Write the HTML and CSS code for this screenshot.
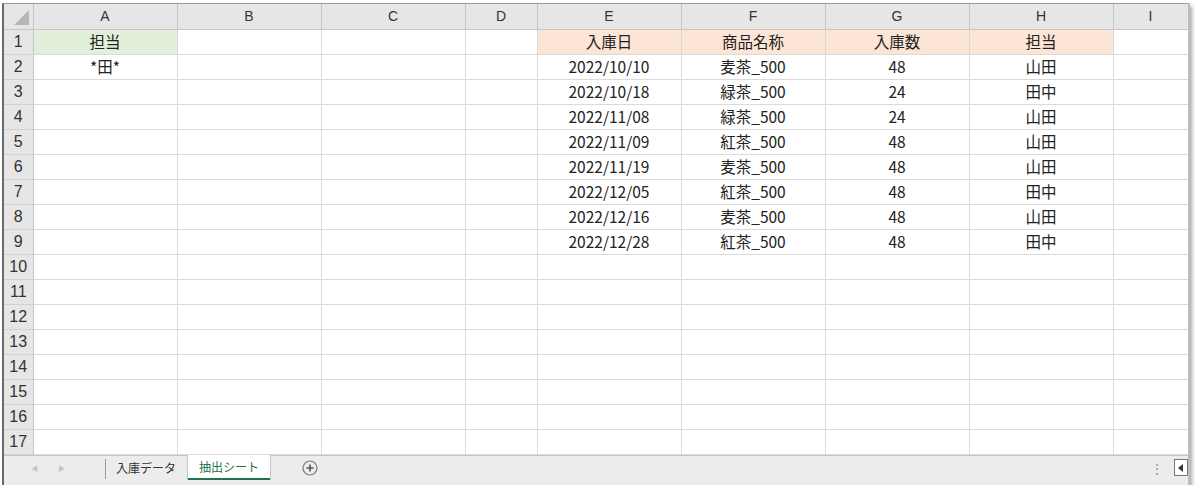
FILE: index.html
```html
<!DOCTYPE html>
<html lang="ja">
<head>
    <meta charset="UTF-8"/>
    <title>抽出シート</title>
<link rel="stylesheet" href="styles.css">
</head>
<body>
    <div id="book">
        <!-- Cell grid -->
        <table id="sheet">
            <colgroup>
                <col class="c-row"><col class="c-wide"><col class="c-wide"><col class="c-wide">
                <col class="c-narrow"><col class="c-wide"><col class="c-wide"><col class="c-wide">
                <col class="c-wide"><col class="c-rest">
            </colgroup>
            <thead>
                <tr>
                    <th class="corner"><span class="tri"></span></th>
                    <th>A</th><th>B</th><th>C</th><th>D</th><th>E</th><th>F</th><th>G</th><th>H</th><th>I</th>
                </tr>
            </thead>
            <tbody id="rows"></tbody>
        </table>

        <!-- Sheet tabs -->
        <div class="tabbar">
            <span class="nav">&#9664;</span>
            <span class="nav">&#9654;</span>
            <span class="sep"></span>
            <span class="tab">入庫データ</span>
            <span class="tab active">抽出シート</span>
            <span class="add">
                <svg width="16" height="16" viewBox="0 0 16 16"><circle cx="8" cy="8" r="7" fill="none" stroke="#777" stroke-width="1.2"/><path d="M8 4.5v7M4.5 8h7" stroke="#555" stroke-width="1.6"/></svg>
            </span>
            <span class="fill"></span>
            <span class="dots">&#8942;</span>
            <span class="scroll"><span class="arrow"></span></span>
        </div>
    </div>
    <script>
        var data = [
            ["2022/10/10", "麦茶_500", "48", "山田"],
            ["2022/10/18", "緑茶_500", "24", "田中"],
            ["2022/11/08", "緑茶_500", "24", "山田"],
            ["2022/11/09", "紅茶_500", "48", "山田"],
            ["2022/11/19", "麦茶_500", "48", "山田"],
            ["2022/12/05", "紅茶_500", "48", "田中"],
            ["2022/12/16", "麦茶_500", "48", "山田"],
            ["2022/12/28", "紅茶_500", "48", "田中"]
        ];
        var body = document.getElementById("rows");
        var html = "";
        for (var r = 1; r <= 17; r++) {
            var cells = ["", "", "", "", "", "", "", "", ""];
            var cls = ["", "", "", "", "", "", "", "", ""];
            if (r == 1) {
                cells[0] = "担当"; cls[0] = "green";
                cells[4] = "入庫日"; cells[5] = "商品名称"; cells[6] = "入庫数"; cells[7] = "担当";
                cls[4] = cls[5] = cls[6] = cls[7] = "orange";
            } else if (r == 2) {
                cells[0] = "*田*";
            }
            if (r >= 2 && r <= 9) {
                var d = data[r - 2];
                cells[4] = d[0]; cells[5] = d[1]; cells[6] = d[2]; cells[7] = d[3];
            }
            html += "<tr><th>" + r + "</th>";
            for (var c = 0; c < 9; c++) {
                html += '<td class="' + cls[c] + '">' + cells[c] + "</td>";
            }
            html += "</tr>";
        }
        body.innerHTML = html;
    </script>
</body>
</html>
```

FILE: styles.css
```css
* {
    margin: 0;
    padding: 0;
    box-sizing: border-box;
}

body {
    background: #fff;
    font-family: "Noto Sans CJK JP", "Noto Sans", sans-serif;
}

#book {
    margin: 3px 0 0 2px;
    width: 1186px;
    height: 482px;
    border-left: 2px solid #6a6a6a;
    border-top: 1px solid #9a9a9a;
    box-shadow: 2px 0 0 #bdbdbd, 4px 3px 4px rgba(0, 0, 0, 0.35);
    background: #fff;
    overflow: hidden;
    display: flex;
    flex-direction: column;
}

#sheet {
    border-collapse: collapse;
    table-layout: fixed;
    width: 1184px;
}

.c-row { width: 29px; }
.c-wide { width: 144px; }
.c-narrow { width: 72px; }
.c-rest { width: 75px; }

#sheet thead th {
    height: 25px;
    background: #e6e6e6;
    border-right: 1px solid #c6c6c6;
    border-bottom: 1px solid #c6c6c6;
    font-family: "Liberation Sans", sans-serif;
    font-size: 14px;
    font-weight: normal;
    color: #333;
    text-align: center;
}

#sheet thead th.corner {
    position: relative;
}

.tri {
    position: absolute;
    right: 4px;
    bottom: 4px;
    width: 0;
    height: 0;
    border-left: 15px solid transparent;
    border-bottom: 15px solid #b7b7b7;
}

#sheet tbody th {
    height: 25px;
    background: #e6e6e6;
    border-right: 1px solid #c6c6c6;
    border-bottom: 1px solid #d2d2d2;
    font-family: "Liberation Sans", sans-serif;
    font-size: 16px;
    font-weight: normal;
    color: #333;
    text-align: center;
}

#sheet td {
    height: 25px;
    border-right: 1px solid #dadada;
    border-bottom: 1px solid #dadada;
    font-size: 15.5px;
    color: #222;
    text-align: center;
    line-height: 23px;
    white-space: nowrap;
}

#sheet td.green { background: #e2efda; }
#sheet td.orange { background: #fce4d6; }

/* Tab strip at the bottom */
.tabbar {
    flex: 1;
    display: flex;
    align-items: flex-start;
    background: #ececec;
    border-top: 1px solid #c6c6c6;
    font-size: 12px;
}

.nav {
    font-size: 7px;
    color: #c4c4c4;
    width: 27px;
    text-align: center;
    line-height: 24px;
}

.nav:first-child { margin-left: 17px; }

.sep {
    width: 1px;
    height: 20px;
    margin: 3px 10px 0 30px;
    background: #9a9a9a;
}

.tab {
    padding: 0 12px 0 0;
    line-height: 24px;
    color: #333;
}

.tab.active {
    margin-top: -1px;
    padding: 0 11px;
    height: 25px;
    background: #fff;
    color: #217346;
    border-bottom: 2px solid #217346;
    box-shadow: 1px 0 0 #c6c6c6, -1px 0 0 #c6c6c6;
}

.add {
    margin: 4px 0 0 32px;
    height: 16px;
}

.fill { flex: 1; }

.dots {
    color: #999;
    font-size: 14px;
    line-height: 24px;
    margin-right: 10px;
}

.scroll {
    width: 14px;
    height: 17px;
    margin-top: 3px;
    border: 1px solid #777;
    background: #fff;
    position: relative;
}

.arrow {
    position: absolute;
    left: 3px;
    top: 4px;
    border-right: 5px solid #333;
    border-top: 4px solid transparent;
    border-bottom: 4px solid transparent;
}
```
